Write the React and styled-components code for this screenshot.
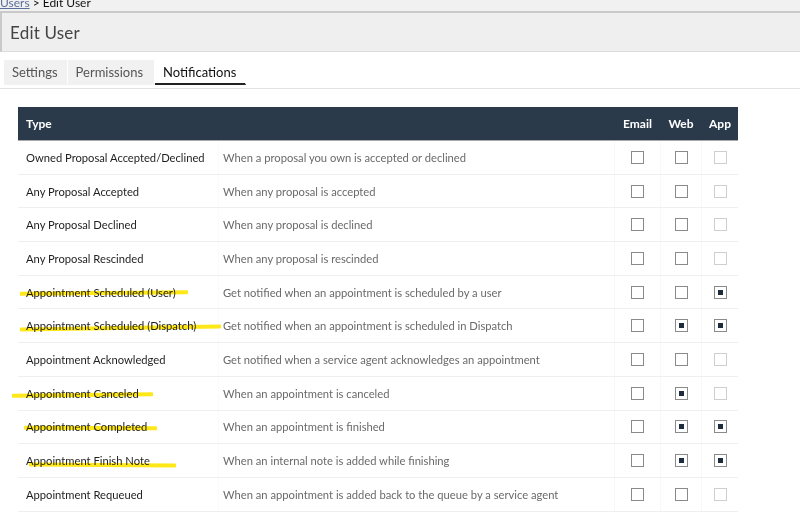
import React from 'react'
import styled, { createGlobalStyle } from 'styled-components'

const GlobalStyle = createGlobalStyle`
  html, body {
    margin: 0;
    padding: 0;
    background: #ffffff;
  }
  body {
    font-family: Lato, "Open Sans", sans-serif;
    color: #222;
  }
`

const rows = [
  { type: 'Owned Proposal Accepted/Declined', desc: 'When a proposal you own is accepted or declined', email: false, web: false, app: null },
  { type: 'Any Proposal Accepted', desc: 'When any proposal is accepted', email: false, web: false, app: null },
  { type: 'Any Proposal Declined', desc: 'When any proposal is declined', email: false, web: false, app: null },
  { type: 'Any Proposal Rescinded', desc: 'When any proposal is rescinded', email: false, web: false, app: null },
  { type: 'Appointment Scheduled (User)', desc: 'Get notified when an appointment is scheduled by a user', email: false, web: false, app: true },
  { type: 'Appointment Scheduled (Dispatch)', desc: 'Get notified when an appointment is scheduled in Dispatch', email: false, web: true, app: true },
  { type: 'Appointment Acknowledged', desc: 'Get notified when a service agent acknowledges an appointment', email: false, web: false, app: null },
  { type: 'Appointment Canceled', desc: 'When an appointment is canceled', email: false, web: true, app: null },
  { type: 'Appointment Completed', desc: 'When an appointment is finished', email: false, web: true, app: true },
  { type: 'Appointment Finish Note', desc: 'When an internal note is added while finishing', email: false, web: true, app: true },
  { type: 'Appointment Requeued', desc: 'When an appointment is added back to the queue by a service agent', email: false, web: false, app: null },
]

// yellow marker strokes drawn over the screenshot
const marks = [
  { left: 20, top: 291, width: 168, rot: -0.6 },
  { left: 20, top: 326, width: 201, rot: -0.8 },
  { left: 12, top: 393, width: 141, rot: -0.6 },
  { left: 24, top: 426, width: 133, rot: 0.3 },
  { left: 29, top: 463, width: 147, rot: 0.4 },
]

export default function App() {
  return (
    <Page>
      <GlobalStyle />
      <Breadcrumb>
        <CrumbLink>Users</CrumbLink> &gt; Edit User
      </Breadcrumb>
      <TitleBar>
        <Title>Edit User</Title>
      </TitleBar>
      <Tabs>
        <Tab>Settings</Tab>
        <Tab>Permissions</Tab>
        <Tab active>Notifications</Tab>
      </Tabs>
      <Content>
        <Table>
          <HeadRow>
            <TypeCell head>Type</TypeCell>
            <DescCell head />
            <BoxCell head w={45}>Email</BoxCell>
            <BoxCell head w={40}>Web</BoxCell>
            <BoxCell head w={36}>App</BoxCell>
          </HeadRow>
          {rows.map((r) => (
            <Row key={r.type}>
              <TypeCell>{r.type}</TypeCell>
              <DescCell>{r.desc}</DescCell>
              <BoxCell w={45}><Check checked={r.email} /></BoxCell>
              <BoxCell w={40}><Check checked={r.web} /></BoxCell>
              <BoxCell w={36}><Check checked={!!r.app} disabled={r.app === null} /></BoxCell>
            </Row>
          ))}
        </Table>
      </Content>
      {marks.map((m, i) => (
        <Marker key={i} style={{ left: m.left, top: m.top, width: m.width, transform: `rotate(${m.rot}deg)` }} />
      ))}
    </Page>
  )
}

const Page = styled.div`
  position: relative;
  width: 800px;
  height: 512px;
  overflow: hidden;
  background: #fff;
`

const Breadcrumb = styled.div`
  height: 11px;
  background: #f1f1f1;
  font-size: 12px;
  line-height: 6px;
  color: #111;
  overflow: hidden;
`

const CrumbLink = styled.span`
  color: #5a6f9a;
  text-decoration: underline;
`

const TitleBar = styled.div`
  height: 38px;
  background: #efefef;
  border-top: 2px solid #c9c9c9;
  border-left: 2px solid #c9c9c9;
  border-bottom: 1px solid #dcdcdc;
  display: flex;
  align-items: center;
  padding-left: 8px;
`

const Title = styled.div`
  font-size: 17px;
  color: #444;
  font-weight: 400;
  letter-spacing: 0.2px;
`

const Tabs = styled.div`
  display: flex;
  padding: 8px 0 0 4px;
  height: 28px;
  border-bottom: 1px solid #e2e2e2;
`

const Tab = styled.div`
  display: flex;
  align-items: center;
  padding: 0 9px 0 8px;
  min-width: ${(p) => (p.active ? '90px' : '0')};
  box-sizing: border-box;
  justify-content: center;
  height: 25px;
  font-size: 13px;
  color: ${(p) => (p.active ? '#111' : '#555')};
  background: ${(p) => (p.active ? '#fff' : '#f1f1f1')};
  border-bottom: 2px solid ${(p) => (p.active ? '#222' : 'transparent')};
  border-right: 1px solid #fff;
  &:nth-child(2) {
    padding-right: 11px;
  }
`

const Content = styled.div`
  padding: 18px 0 0 18px;
`

const Table = styled.div`
  width: 720px;
`

const HeadRow = styled.div`
  display: flex;
  height: 34px;
  background: #2b3a4b;
  border-bottom: 1px solid #a9a9a9;
  box-sizing: border-box;
  color: #fff;
  font-weight: 700;
  font-size: 12px;
`

const Row = styled.div`
  display: flex;
  height: 33.7px;
  box-sizing: border-box;
  border-bottom: 1px solid #efefef;
  font-size: 11.2px;
`

const TypeCell = styled.div`
  width: 200px;
  flex: none;
  box-sizing: border-box;
  padding-left: 8px;
  display: flex;
  align-items: center;
  white-space: nowrap;
  color: ${(p) => (p.head ? '#fff' : '#1e1e1e')};
  font-size: ${(p) => (p.head ? '12px' : '11.2px')};
`

const DescCell = styled.div`
  flex: 1;
  padding-left: 4px;
  display: flex;
  align-items: center;
  white-space: nowrap;
  color: #6a6a6a;
  border-left: 1px solid ${(p) => (p.head ? 'transparent' : '#fafafa')};
`

const BoxCell = styled.div`
  width: ${(p) => p.w}px;
  flex: none;
  display: flex;
  align-items: center;
  justify-content: center;
  border-left: 1px solid ${(p) => (p.head ? 'transparent' : '#f8f8f8')};
  color: #fff;
  font-size: 12px;
  font-weight: 700;
`

const Check = styled.span`
  width: 13px;
  height: 13px;
  box-sizing: border-box;
  border: 1.5px solid ${(p) => (p.disabled ? '#cfcfcf' : '#8a8a8a')};
  background: #fff;
  display: flex;
  align-items: center;
  justify-content: center;
  &::after {
    content: '';
    width: 5px;
    height: 5px;
    background: ${(p) => (p.checked ? '#1e2b3c' : 'transparent')};
  }
`

const Marker = styled.div`
  position: absolute;
  height: 4px;
  background: #ffe600;
  opacity: 0.9;
  border-radius: 1px;
  mix-blend-mode: multiply;
`
